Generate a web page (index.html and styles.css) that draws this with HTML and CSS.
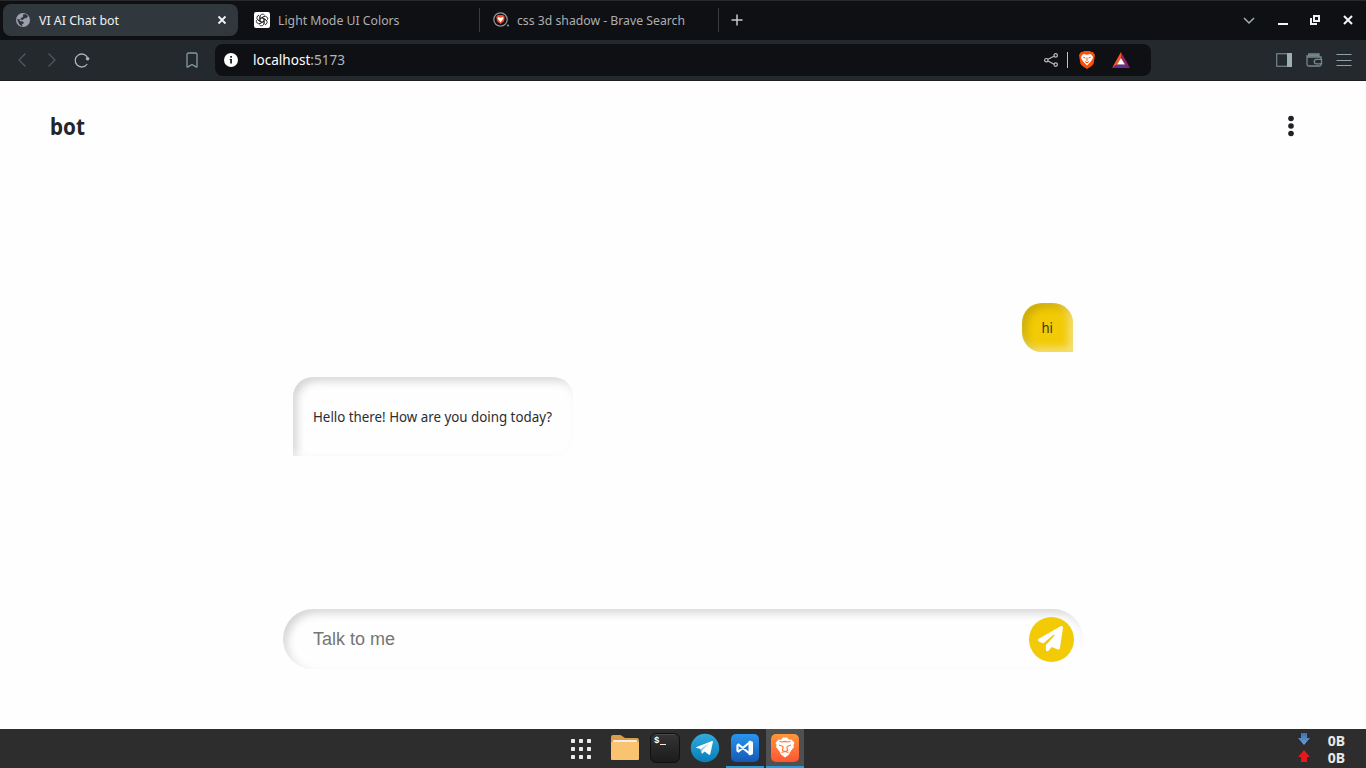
FILE: index.html
```html
<!DOCTYPE html>
<html lang="en">
<head>
<meta charset="utf-8">
<title>VI AI Chat bot</title>
<link rel="stylesheet" href="styles.css">
</head>
<body>
<svg width="0" height="0" class="defs">
  <defs>
    <linearGradient id="tg" x2="0" y2="1"><stop stop-color="#31aadd"/><stop offset="1" stop-color="#087eb9"/></linearGradient>
    <linearGradient id="vs" x2="0" y2="1"><stop stop-color="#2795f0"/><stop offset="1" stop-color="#1559b6"/></linearGradient>
    <linearGradient id="br" x2="0" y2="1"><stop stop-color="#ff9739"/><stop offset="1" stop-color="#ff5634"/></linearGradient>
    <linearGradient id="tm" x2="0" y2="1"><stop stop-color="#353535"/><stop offset="1" stop-color="#1b1b1b"/></linearGradient>
    <linearGradient id="down" x2="0" y2="1"><stop stop-color="#426fae"/><stop offset="1" stop-color="#6ba0dc"/></linearGradient>
  </defs>
</svg>
<div class="browser">
  <div class="tabs">
    <div class="tab active">
      <svg class="fav" width="16" height="16" viewBox="0 0 16 16"><circle cx="8" cy="8" r="7" fill="#9ca0ac"/><path d="M8 2.500 10.500 2l2.500 2-1.200 2L9 6.500 8 8 5 7.500 4.500 9 8 9.500 9 11 7 12.500 7.500 15 4 12 2 7l3 .5L6.500 5.500 8 5z" fill="#30383d"/></svg>
      <svg class="label light" width="84" height="24"><text y="17" textLength="80" lengthAdjust="spacingAndGlyphs">VI AI Chat bot</text></svg>
      <svg class="tab-close" width="10" height="10" viewBox="0 0 10 10"><path d="M1.500 1.500l7 7m0-7l-7 7" stroke="#f3f5f5" stroke-width="1.800"/></svg>
    </div>
    <div class="tab second">
      <svg class="fav" width="16" height="16" viewBox="0 0 16 16"><rect width="16" height="16" rx="2" fill="#fff"/><g fill="none" stroke="#222" stroke-width=".85"><path id="petal" d="M6 9.200V4.600a2.600 2.600 0 0 1 4.600-1.500M6 6.800 9.500 4.700a2.600 2.600 0 0 1 1.500-.4"/><use href="#petal" transform="rotate(60 8 8)"/><use href="#petal" transform="rotate(120 8 8)"/><use href="#petal" transform="rotate(180 8 8)"/><use href="#petal" transform="rotate(240 8 8)"/><use href="#petal" transform="rotate(300 8 8)"/></g></svg>
      <svg class="label" width="126" height="24"><text y="17" textLength="121.500" lengthAdjust="spacingAndGlyphs">Light Mode UI Colors</text></svg>
    </div>
    <div class="tab third">
      <svg class="fav" width="17" height="16" viewBox="0 0 17 16"><circle cx="7.500" cy="7.500" r="6.700" fill="none" stroke="#92959c" stroke-width="1.200"/><path d="M3.300 4.700 5 3h5l1.700 1.700-.7 4.600L7.500 12 4 9.300z" fill="#f54b29"/><path d="M5 5l2.500.7L10 5l.5 1.500L8.500 9l-1 1.200-1-1.200-2-2.500z" fill="#fff"/><circle cx="15" cy="13.500" r="1.100" fill="#92959c"/></svg>
      <svg class="label" width="172" height="24"><text y="17" textLength="168" lengthAdjust="spacingAndGlyphs">css 3d shadow - Brave Search</text></svg>
    </div>
    <svg class="plus" width="12" height="12"><path d="M6 .5v11M.5 6h11" stroke="#c7c8ca" stroke-width="1.500"/></svg>
    <div class="window-controls">
      <svg width="12" height="12" viewBox="0 0 12 12"><path d="M1 4l5 5 5-5" fill="none" stroke="#9eadb2" stroke-width="1.500"/></svg>
      <svg width="10" height="10"><path d="M0 8h10v2H0z" fill="#f3f5f6"/></svg>
      <svg width="10" height="10"><path d="M4 1h5v5H4zM1 3v6h6" fill="none" stroke="#eef0f1" stroke-width="2"/></svg>
      <svg width="10" height="10"><path d="M1 1l8 8m0-8l-8 8" stroke="#f3f5f6" stroke-width="2"/></svg>
    </div>
  </div>
  <div class="toolbar">
    <div class="nav">
      <svg width="16" height="16"><path d="M11.500 1.500 5 8l6.500 6.500" fill="none" stroke="#4d5a60" stroke-width="1.300"/></svg>
      <svg width="16" height="16"><path d="M4.500 1.500 11 8l-6.500 6.500" fill="none" stroke="#4d5a60" stroke-width="1.300"/></svg>
      <svg width="16" height="16"><path d="M13.900 6.500A6.500 6.500 0 1 0 13.200 12" fill="none" stroke="#a4b4ba" stroke-width="1.300"/><circle cx="13.600" cy="6.700" r="1.800" fill="#a4b4ba"/></svg>
    </div>
    <svg class="bookmark" width="12" height="16"><path d="M1 14.500V2.500Q1 1 2.500 1h7Q11 1 11 2.500v12q0 1-1 .4L6 12.500 2 14.900q-1 .6-1-.4z" fill="none" stroke="#8299a2" stroke-width="1.300"/></svg>
    <div class="address">
      <svg width="14" height="14"><circle cx="7" cy="7" r="7" fill="#fff"/><path d="M6.200 3h1.700v1.700H6.200zM5.600 6h2.300v4.500H6.200V7h-.6z" fill="#101217"/></svg>
      <svg class="url" width="96" height="26"><text y="18" textLength="92" lengthAdjust="spacingAndGlyphs">localhost<tspan fill="#b0b5be">:5173</tspan></text></svg>
      <div class="address-actions">
        <svg width="14" height="14" fill="none" stroke="#bbbdc1" stroke-width="1.200"><path d="M4 6.200l6-3M4 8l6 3.200"/><circle cx="2.300" cy="7.200" r="1.700"/><circle cx="11.700" cy="2.400" r="1.700"/><circle cx="11.700" cy="11.600" r="1.700"/></svg>
        <i></i>
        <svg class="shield" width="16" height="18" viewBox="0 0 16 18"><path d="M3.500 1 5 0h6l1.500 1h1.500L16 4l-1.500 9L12 15.500 8 18l-4-2.500L1.500 13 0 4l2-3z" fill="#fb4f08"/><path d="M2.500 5l2-2L8 3.700l3.500-.7 2 2 .5 2-2.500 4L8 14.500 4.500 11 2 7z" fill="#fff"/><path d="M4.200 6.200l2.300.9M11.800 6.200l-2.300.9M8 6.500v3.500M5.800 10.500 8 11.800l2.200-1.300" fill="none" stroke="#fb4f08" stroke-width="1"/></svg>
        <svg width="18" height="16" viewBox="0 0 18 16"><path d="M9 0v6L5 12.500 0 16z" fill="#ff5522"/><path d="M9 0l9 16-5-3.500L9 6z" fill="#9e1f63"/><path d="M0 16l5-3.500h8l5 3.500z" fill="#662d91"/><path d="M9 6l4 6.500H5z" fill="#fff"/></svg>
      </div>
    </div>
    <div class="tools">
      <svg width="16" height="14"><rect x=".7" y=".7" width="14.600" height="12.600" fill="none" stroke="#6f7e84" stroke-width="1.300"/><path d="M11 0h5v14h-5z" fill="#9cafb7"/></svg>
      <svg width="16" height="14" fill="none" stroke="#768990" stroke-width="1.300"><path d="M2 1h11v3M1 2.500Q1 4 3 4h12v3M15 10v1.500q0 1.500-1.500 1.500H3q-2 0-2-2V2M15.500 6.300h-5a2 2 0 0 0 0 4.500h5z"/><path d="M2 2.500h11" stroke-width="2"/></svg>
      <svg width="16" height="14"><path d="M.5 1.500h15M.5 7.500h15M.5 12.500h15" stroke="#8fa0a6" stroke-width="1"/></svg>
    </div>
  </div>
</div>
<main>
  <header>
    <svg class="brand" width="38" height="36"><text y="27" textLength="35" lengthAdjust="spacingAndGlyphs">bot</text></svg>
    <svg class="more" width="6" height="22" fill="#202127"><circle cx="3" cy="3.500" r="2.800"/><circle cx="3" cy="11" r="2.800"/><circle cx="3" cy="18.500" r="2.800"/></svg>
  </header>
  <section class="chat">
    <div class="message user"><svg width="14" height="28"><text x=".5" y="19" textLength="11.500" lengthAdjust="spacingAndGlyphs">hi</text></svg></div>
    <div class="message reply"><svg width="242" height="28"><text x="1" y="19" textLength="239" lengthAdjust="spacingAndGlyphs">Hello there! How are you doing today?</text></svg></div>
  </section>
  <form class="composer">
    <input type="text" placeholder="Talk to me" aria-label="Message">
    <button type="button" aria-label="Send"><svg width="25" height="25" viewBox="0 0 512 512"><path fill="#fff" d="M498 6c11 8 16 20 14 33l-64 417c-2 10-8 18-16 23s-19 5-28 2l-120-50-69 75c-9 10-23 13-35 8s-20-17-20-30v-84c0-4 2-8 4-11l168-183c6-6 6-16 0-22s-15-6-22-1L106 360 17 316c-11-5-18-15-18-27s6-23 16-29L463 4c11-6 25-5 35 2z"/></svg></button>
  </form>
</main>
<footer>
  <div class="dock">
    <div class="app grid"><svg width="20" height="20" fill="#ececec"><rect width="4" height="4" rx=".7"/><rect x="8" width="4" height="4" rx=".7"/><rect x="16" width="4" height="4" rx=".7"/><rect y="8" width="4" height="4" rx=".7"/><rect x="8" y="8" width="4" height="4" rx=".7"/><rect x="16" y="8" width="4" height="4" rx=".7"/><rect y="16" width="4" height="4" rx=".7"/><rect x="8" y="16" width="4" height="4" rx=".7"/><rect x="16" y="16" width="4" height="4" rx=".7"/></svg></div>
    <div class="app up"><svg width="28" height="26"><path d="M0 2Q0 0 2 0h7q1 0 2 1l3 2h12q2 0 2 2v8H0z" fill="#dc9d48"/><rect x="2" y="5" width="24" height="6" rx="1" fill="#eee"/><path d="M0 8q0-1 1-1h26q1 0 1 1v16q0 1-1 1H1q-1 0-1-1z" fill="#f9c36f"/></svg></div>
    <div class="app up"><svg width="30" height="30"><rect x=".5" y=".5" width="29" height="29" rx="5.500" fill="url(#tm)" stroke="#101010"/><path d="M5 1.500h20" stroke="#4b4b4b"/><text class="term" x="4" y="10">$</text><path d="M10 11.500h6" stroke="#eee"/></svg></div>
    <div class="app up"><svg width="30" height="30"><circle cx="15" cy="15" r="14.200" fill="url(#tg)"/><path d="M6 14.300 22 8q1.200-.4.900 1.100L20.300 21q-.4 1.400-1.700.5l-4-3-2.100 2q-.6.500-.8-.5l-1.200-4-4.200-1.200q-.8-.3-.3-.5z" fill="#fff"/><path d="M10.500 16 19 10.500l-6.500 6.400-.7 3.300" fill="#9acce5"/></svg></div>
    <div class="app vscode"><svg width="30" height="30"><rect x="1" y="1" width="28" height="28" rx="5" fill="url(#vs)"/><path d="M19.500 9.500 8.500 18.500l-1-.8v-5.400l1-.8L19.500 20.500" fill="none" stroke="#fff" stroke-width="2.200" stroke-linejoin="round"/><path d="M18.500 8.500 20 7.500l3 1.500v12l-3 1.500-1.500-1z" fill="#fff"/></svg></div>
    <div class="app brave"><svg width="30" height="30"><rect x="1" y="1" width="28" height="28" rx="5" fill="url(#br)"/><path d="M8.500 6.500 11 6.700 13 4.500h4l2 2.200 2.500-.2L24.500 10l-1.200 2 .7 2-3.500 4.500-1.500 3L15 24.500l-4-3-1.500-3L6 14l.7-2-1.200-2z" fill="#fff"/><path d="M9.500 8.500 12 9l3-.6 3 .6 2.500-.5M9 12l4 1.500M21 12l-4 1.500M13.300 13.500l-1 4 2.700 1 2.700-1-1-4M11.500 19.500 15 18.500l3.500 1" fill="none" stroke="#ff7837" stroke-width="1.100"/></svg></div>
  </div>
  <div class="network">
    <div><svg width="12" height="13"><path d="M3 0h6v5h3L6 12 0 5h3z" fill="url(#down)"/></svg><span>0B</span></div>
    <div><svg width="12" height="13"><path d="M6 0l6 7H9v5H3V7H0z" fill="#e5191b"/></svg><span>0B</span></div>
  </div>
</footer>
</body>
</html>
```
FILE: styles.css
```css
* { box-sizing: border-box; }
body { margin: 0; width: 1366px; height: 768px; overflow: hidden; display: flex; flex-direction: column; background: #fefefe; color: #202127; font-family: "Noto Sans", sans-serif; }
svg { display: block; flex: none; overflow: visible; }
.defs { position: absolute; }
.browser { height: 81px; flex: none; }
.tabs { display: flex; align-items: center; height: 40px; padding-bottom: 1px; background: #0f1014; border-top: 1px solid #27292b; }
.tab { display: flex; align-items: center; height: 32px; flex: none; }
.active { width: 235px; margin-left: 3px; padding-left: 12px; border-radius: 8px; background: #30383d; }
.label { font-size: 13px; fill: #adaeb1; margin-left: 8px; }
.light { fill: #eef0f1; }
.tab-close { margin-left: 94px; }
.second { width: 242px; padding-left: 16px; height: 24px; border-right: 1px solid #393b3e; }
.third { width: 239px; padding-left: 13px; height: 24px; border-right: 1px solid #393b3e; }
.third .label { margin-left: 7px; }
.plus { margin-left: 12px; }
.window-controls { margin-left: auto; margin-right: 13px; display: flex; align-items: center; }
.window-controls svg:nth-child(1) { margin-right: 23px; }
.window-controls svg:nth-child(2) { margin-right: 22px; }
.window-controls svg:nth-child(3) { margin-right: 23px; }
.toolbar { height: 41px; background: #23292c; display: flex; align-items: center; border-bottom: 1px solid #1a1f22; }
.nav { margin-left: 14px; display: flex; gap: 14px; }
.bookmark { margin-left: 96px; }
.address { width: 936px; height: 32px; margin-left: 17px; padding-left: 9px; border-radius: 8px; background: #0f1014; display: flex; align-items: center; }
.url { font-size: 14.5px; fill: #fff; margin-left: 15px; }
.address-actions { margin-left: auto; margin-right: 21px; display: flex; align-items: center; }
.address-actions i { width: 1px; height: 16px; background: #bec0c2; margin: 0 11px 0 9px; }
.address-actions .shield { margin-right: 17px; }
.tools { margin-left: 125px; display: flex; gap: 14px; }
main { height: 648px; display: flex; flex-direction: column; align-items: center; }
header { width: 100%; height: 90px; padding: 0 72px 0 50px; display: flex; align-items: center; justify-content: space-between; }
.brand { font-size: 23px; font-weight: 700; fill: #22252a; }
.chat { width: 780px; height: 438px; padding-top: 132px; display: flex; flex-direction: column; gap: 25px; }
.message { display: flex; align-items: center; justify-content: center; font-size: 15px; }
.message text { fill: #292d33; }
.user text { fill: #3a3614; }
.user, .reply, .composer { box-shadow: inset -4px -4px 8px rgba(255,255,255,.5), inset 4px 4px 8px rgba(0,0,0,.17); }
.user { width: 51px; height: 49px; align-self: flex-end; border-radius: 20px 20px 0 20px; background: #f2ca06; }
.reply { width: 280px; height: 79px; border-radius: 20px 20px 20px 0; }
.composer { margin: 0; width: 800px; height: 60px; display: flex; align-items: center; border-radius: 30px; padding: 0 9px 0 30px; }
.composer input { flex: 1; min-width: 0; border: 0; outline: 0; padding: 0; background: transparent; font: 18px "Liberation Sans", Arial, sans-serif; }
.composer input::placeholder { color: #757575; }
.composer button { width: 45px; height: 45px; border: 0; border-radius: 50%; padding: 0; display: flex; align-items: center; justify-content: center; background: #f2ca06; }
.composer button svg { transform: translate(-1px, -1px); }
footer { height: 39px; background: #2d2d2d; display: flex; }
.dock { display: flex; gap: 2px; margin-left: 562px; }
.app { width: 38px; display: flex; align-items: center; justify-content: center; }
.grid { margin-right: 4px; }
.up { padding-bottom: 1px; }
.vscode { border-bottom: 2px solid #249dd9; }
.brave { border-bottom: 2px solid #249dd9; background: #505050; }
.term { font: bold 9px "Liberation Mono", monospace; fill: #fff; }
.network { margin-left: auto; margin-right: 21px; padding-top: 4px; font: bold 14px/17px "Noto Sans", sans-serif; color: #e8e8e8; }
.network div { display: flex; justify-content: space-between; width: 47px; height: 17px; }
.network span { margin-top: -1px; }
```
